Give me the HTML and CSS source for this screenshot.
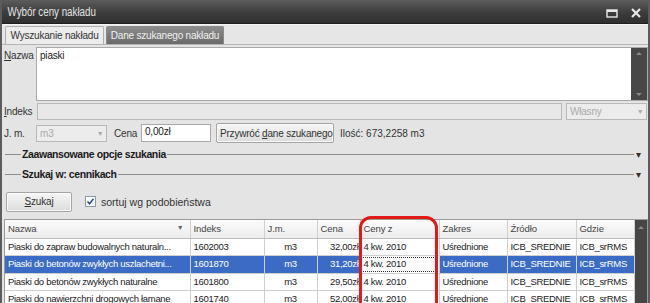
FILE: index.html
```html
<!DOCTYPE html>
<html lang="pl">
<head>
<meta charset="utf-8">
<link rel="stylesheet" href="styles.css">
</head>
<body>
<div class="window">
  <div class="titlebar">
    <span class="title">Wybór ceny nakładu</span>
    <span class="tb-icons">
      <svg width="12" height="10" viewBox="0 0 12 10"><rect x="1" y="2" width="10" height="7" fill="none" stroke="#e8e8e8" stroke-width="1.4"/><rect x="1" y="2" width="10" height="2" fill="#e8e8e8"/></svg>
      <svg width="12" height="10" viewBox="0 0 12 10"><path d="M2 1 L10 9 M10 1 L2 9" stroke="#e8e8e8" stroke-width="2.2"/></svg>
    </span>
  </div>
  <div class="tabs">
    <div class="tab active">Wyszukanie nakładu</div>
    <div class="tab">Dane szukanego nakładu</div>
  </div>
  <div class="panel">
    <div class="row-nazwa">
      <label class="lbl"><u>N</u>azwa</label>
      <div class="textarea">
        <span class="ta-text">piaski</span>
        <div class="ta-scroll"><span class="arr up"></span><span class="arr down"></span></div>
      </div>
    </div>
    <div class="row-indeks">
      <label class="lbl"><u>I</u>ndeks</label>
      <div class="input disabled wide"></div>
      <div class="combo disabled w-wlasny"><span>Własny</span><span class="caret">▾</span></div>
    </div>
    <div class="row-jm">
      <label class="lbl">J. m.</label>
      <div class="combo disabled w-jm"><span>m3</span><span class="caret">▾</span></div>
      <label class="lbl cena">Cena</label>
      <div class="input w-cena">0,00zł</div>
      <button class="btn w-przywroc">Przywróć <u>d</u>ane szukanego</button>
      <span class="ilosc">Ilość: 673,2258 m3</span>
    </div>
    <div class="section first"><span class="dash"></span><span class="sec-title">Zaawansowane opcje szukania</span><span class="line"></span><span class="sec-arrow">▾</span></div>
    <div class="section"><span class="dash"></span><span class="sec-title">Szukaj w: cennikach</span><span class="line"></span><span class="sec-arrow">▾</span></div>
    <div class="row-search">
      <button class="btn w-szukaj"><u>S</u>zukaj</button>
      <span class="check"><svg width="11" height="11" viewBox="0 0 11 11"><rect x="0.5" y="0.5" width="10" height="10" fill="#fff" stroke="#8a9bb3"/><path d="M2.5 5.5 L4.5 7.8 L8.5 2.8" fill="none" stroke="#2a4a9a" stroke-width="1.5"/></svg></span>
      <span class="check-lbl">sortuj w<u>g</u> podobieństwa</span>
    </div>
    <div class="grid">
      <table>
        <colgroup>
          <col style="width:185px"><col style="width:74px"><col style="width:53px"><col style="width:43px"><col style="width:79px"><col style="width:68px"><col style="width:69px"><col style="width:58px">
        </colgroup>
        <thead>
          <tr><th class="filt">Nazwa<span class="farrow">▼</span></th><th>Indeks</th><th>J.m.</th><th>Cena</th><th>Ceny z</th><th>Zakres</th><th>Źródło</th><th>Gdzie</th></tr>
        </thead>
        <tbody>
          <tr><td>Piaski do zapraw budowalnych naturaln...</td><td>1602003</td><td class="c">m3</td><td class="r">32,00zł</td><td>4 kw. 2010</td><td>Uśrednione</td><td>ICB_SREDNIE</td><td>ICB_srRMS</td></tr>
          <tr class="sel"><td>Piaski do betonów zwykłych uszlachetni...</td><td>1601870</td><td class="c">m3</td><td class="r">31,20zł</td><td class="focus">4 kw. 2010</td><td>Uśrednione</td><td>ICB_SREDNIE</td><td>ICB_srRMS</td></tr>
          <tr><td>Piaski do betonów zwykłych naturalne</td><td>1601800</td><td class="c">m3</td><td class="r">29,50zł</td><td>4 kw. 2010</td><td>Uśrednione</td><td>ICB_SREDNIE</td><td>ICB_srRMS</td></tr>
          <tr><td>Piaski do nawierzchni drogowych łamane</td><td>1601740</td><td class="c">m3</td><td class="r">52,00zł</td><td>4 kw. 2010</td><td>Uśrednione</td><td>ICB_SREDNIE</td><td>ICB_srRMS</td></tr>
        </tbody>
      </table>
      <div class="grid-scroll"><span class="arr up"></span></div>
    </div>
  </div>
  <div class="highlight"></div>
</div>
</body>
</html>
```
FILE: styles.css
```css
* { box-sizing: border-box; }
html, body { margin: 0; padding: 0; }
body {
  width: 650px; height: 303px; overflow: hidden;
  font-family: "Liberation Sans", "DejaVu Sans", sans-serif;
  font-size: 10px; letter-spacing: -0.2px; color: #222;
  background: #3a3a3a;
}
.window {
  position: relative;
  width: 650px; height: 303px;
  display: flex; flex-direction: column;
  background: #e4e4e4;
  border-left: 2px solid #5c5c5c;
  border-right: 2px solid #5c5c5c;
  overflow: hidden;
  white-space: nowrap;
}
.titlebar {
  height: 24px; flex: none;
  display: flex; align-items: center; justify-content: space-between;
  padding: 0 8px 0 6px;
  background: linear-gradient(#5c5c5c, #3c3c3c 55%, #2f2f2f);
  border-bottom: 1px solid #1e1e1e;
  margin: 0 -2px;
}
.title {
  color: #e4e4e4; font-size: 12.5px; letter-spacing: 0;
  padding-left: 2px; display: inline-block;
  transform: scaleX(0.78); transform-origin: left center;
}
.tb-icons { display: flex; gap: 12px; align-items: center; padding-top: 2px; }
.tabs {
  height: 21px; flex: none;
  display: flex; align-items: flex-end; gap: 2px;
  padding: 0 0 0 3px;
  background: #e6e6e6;
  border-bottom: 1px solid #b4b4b4;
  box-shadow: inset 0 1px 0 #f4f4f4;
}
.tab {
  height: 18px; padding: 0 4px;
  display: flex; align-items: center; justify-content: center;
  border: 1px solid #8a8a8a; border-bottom: none;
  border-radius: 2px 2px 0 0;
  background: linear-gradient(#8c8c8c, #6a6a6a);
  color: #f2f2f2;
  width: 118px;
}
.tab.active {
  background: #ececec; color: #333;
  border-color: #b0b0b0;
  width: 99px;
}
.panel { flex: 1; display: flex; flex-direction: column; padding: 2px 0 0 1px; }
.lbl { color: #333; }
u { text-decoration: underline; text-underline-offset: 1px; }
.row-nazwa { display: flex; height: 54px; }
.row-nazwa .lbl { width: 33px; padding-top: 3px; padding-left: 1px; }
.textarea {
  flex: 1; position: relative;
  background: #fff; border: 1px solid #a9a9a9;
  display: flex; justify-content: space-between;
}
.ta-text { padding: 2px 0 0 3px; color: #222; }
.ta-scroll {
  width: 16px; background: #474747;
  display: flex; flex-direction: column; justify-content: space-between; align-items: center;
  padding: 4px 0;
}
.arr { width: 0; height: 0; border-left: 3px solid transparent; border-right: 3px solid transparent; }
.arr.up { border-bottom: 3px solid #888; }
.arr.down { border-top: 3px solid #888; }
.row-indeks { display: flex; align-items: center; margin-top: 2px; height: 17px; gap: 4px; }
.row-indeks .lbl { width: 30px; padding-left: 1px; }
.input {
  height: 17px; border: 1px solid #a9a9a9; background: #fff;
  padding: 1px 3px; color: #222;
}
.input.disabled { background: #e8e8e8; border-color: #b8b8b8; }
.wide { width: 525px; }
.combo {
  height: 17px; border: 1px solid #b8b8b8; background: #ececec;
  display: flex; justify-content: space-between; align-items: center;
  padding: 0 4px 0 3px; color: #aaa;
}
.caret { font-size: 8px; color: #aaa; }
.w-wlasny { width: 81px; }
.row-jm { display: flex; align-items: center; margin-top: 3px; height: 20px; }
.row-jm > .lbl:first-child { width: 33px; padding-left: 1px; }
.w-jm { width: 71px; }
.lbl.cena { margin-left: 7px; width: 27px; }
.w-cena { width: 70px; height: 18px; }
.btn {
  font-family: inherit; font-size: 10px; letter-spacing: -0.2px; color: #333;
  border: 1px solid #a4a4a4; border-radius: 2px;
  background: linear-gradient(#f6f6f6, #dcdcdc);
  box-shadow: inset 0 0 0 1px #fafafa;
  padding: 0 3px; cursor: default; white-space: nowrap;
}
.w-przywroc { width: 118px; height: 20px; margin-left: 5px; }
.ilosc { margin-left: 6px; color: #333; letter-spacing: 0; }
.section { display: flex; align-items: center; height: 20px; padding-right: 4px; }
.section.first { margin-top: 1px; }
.dash { width: 16px; height: 1px; background: #8c8c8c; margin-left: 2px; }
.sec-title { font-weight: bold; font-size: 10.5px; color: #1a1a1a; padding: 0 1px; letter-spacing: -0.4px; }
.line { flex: 1; height: 1px; background: #8c8c8c; }
.sec-arrow { font-size: 10px; color: #333; margin-left: 2px; width: 8px; }
.row-search { display: flex; align-items: center; height: 21px; margin-top: 7px; }
.w-szukaj { width: 66px; height: 20px; margin-left: 3px; }
.check { margin-left: 13px; display: flex; }
.check-lbl { margin-left: 5px; color: #333; font-size: 10.5px; letter-spacing: 0; }
.grid {
  margin-top: 7px; margin-left: 1px; margin-right: 0;
  display: flex; flex: 1; min-height: 0;
  border: 1px solid #9a9a9a; border-bottom: none;
  background: #fff; overflow: hidden;
}
table { border-collapse: collapse; table-layout: fixed; width: 629px; flex: none; align-self: flex-start; }
th, td {
  height: 17.5px; padding: 0 3px 1px; white-space: nowrap; overflow: hidden;
  text-align: left; font-weight: normal; font-size: 9.5px; letter-spacing: -0.3px;
  border-right: 1px solid #cfcfcf; border-bottom: 1px solid #cfcfcf;
}
th { height: 18px; background: linear-gradient(#fbfbfb, #ececec); color: #444; border-bottom-color: #bdbdbd; letter-spacing: -0.1px; }
th.filt { position: relative; }
.farrow { position: absolute; right: 6px; top: 4px; font-size: 7px; color: #666; }
td { color: #222; }
td.c { text-align: center; }
td.r { text-align: right; padding-right: 1px; }
tr.sel td { background: #3b6bc4; color: #fff; }
tr.sel td.focus { background: #fff; color: #222; outline: 1px dotted #333; outline-offset: -2px; }
.grid-scroll {
  flex: 1; background: #464646;
  display: flex; justify-content: center; padding-top: 6px;
}
.highlight {
  position: absolute; left: 357px; top: 216px;
  width: 79px; height: 100px;
  border: 3px solid #e11919; border-radius: 12px;
  pointer-events: none;
}
```
